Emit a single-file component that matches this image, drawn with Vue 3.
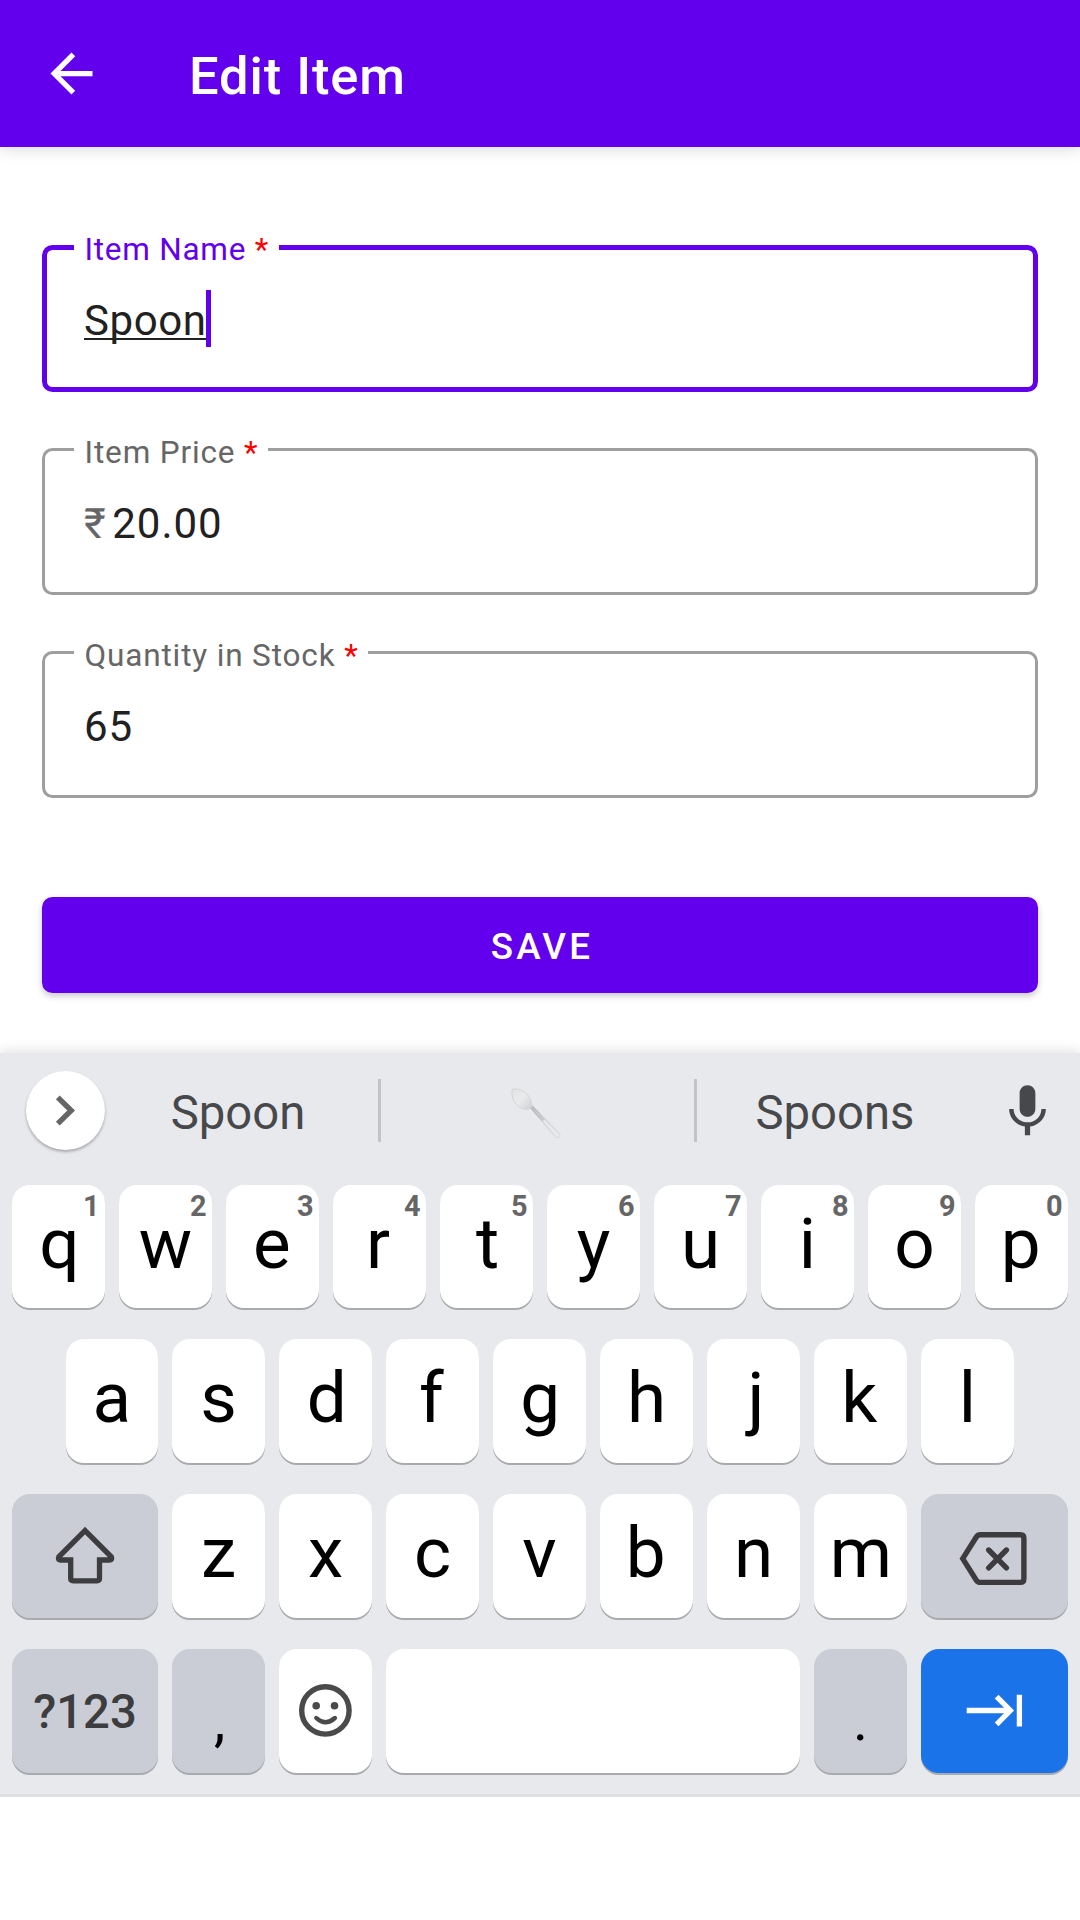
<script setup>
const fields = [
  { label: 'Item Name', value: 'Spoon', focused: true },
  { label: 'Item Price', value: '20.00', prefix: '₹' },
  { label: 'Quantity in Stock', value: '65' },
]
const row1 = [...'qwertyuiop'].map((c, i) => ({ c, hint: (i + 1) % 10 }))
const row2 = [...'asdfghjkl']
const row3 = [...'zxcvbnm']

// Optical centring: nudges in px for glyphs with uneven side bearings
const nudges = { q: 1, e: -0.6, r: -1.4, t: 1, p: -0.7, d: 1.3, f: -1.2, g: 0.7, j: 2.6, k: -1.3, b: -0.7, m: 0.5 }
const nudge = (c) => ({ transform: `translateX(${nudges[c] || 0}px)` })
</script>

<template>
  <div class="screen">
    <header class="appbar">
      <svg class="back" viewBox="0 0 24 24"><path fill="#fff" d="M20 11H7.83l5.59-5.59L12 4l-8 8 8 8 1.41-1.41L7.83 13H20v-2z" /></svg>
      <h1>Edit Item</h1>
    </header>

    <main class="form">
      <div v-for="f in fields" :key="f.label" class="field" :class="{ focused: f.focused }">
        <label>{{ f.label }} <span class="star">*</span></label>
        <span v-if="f.prefix" class="prefix">{{ f.prefix }}</span>
        <span class="value">{{ f.value }}</span>
        <span v-if="f.focused" class="caret"></span>
      </div>
      <button class="save">SAVE</button>
    </main>

    <section class="keyboard">
      <div class="strip">
        <div class="expand">
          <svg width="79" height="79" viewBox="0 0 79 79"><path d="M31.8 26.3 L45.2 39.5 L31.8 52.7" fill="none" stroke="#666" stroke-width="5.4" /></svg>
        </div>
        <div class="suggestion first">Spoon</div>
        <i class="divider"></i>
        <div class="suggestion emoji">
          <svg width="54" height="54" viewBox="510 1086 54 54">
            <defs>
              <linearGradient id="bowl" x1="0" y1="0" x2="1" y2="1">
                <stop offset="0" stop-color="#e2e3e4" /><stop offset=".5" stop-color="#e9eaeb" /><stop offset="1" stop-color="#cfd0d1" />
              </linearGradient>
              <linearGradient id="handle" x1="0" y1="0" x2="1" y2="1">
                <stop offset="0" stop-color="#a9abac" /><stop offset=".4" stop-color="#cfd0d1" /><stop offset="1" stop-color="#dcdddd" />
              </linearGradient>
            </defs>
            <path d="M531 1107 L533.5 1106.5 L560.3 1133.6 Q561.8 1136 560 1137.3 Q558 1138.2 556 1136.4 Z" fill="#e8e9ea" stroke="url(#handle)" stroke-width="1.3" />
            <path d="M531 1107.5 L533.5 1106.5 L546 1120 L543 1121 Z" fill="#bcbebf" opacity=".75" />
            <path d="M513 1089.8 Q514.5 1088.2 519 1089.3 Q527 1090.8 531.2 1098.5 Q532.9 1102 532.4 1107.4 Q530.5 1109.5 526 1109.2 Q518.5 1108 514.5 1100.5 Q512.2 1095 513 1089.8Z" fill="url(#bowl)" stroke="#d3d4d5" stroke-width="1" />
          </svg>
        </div>
        <i class="divider"></i>
        <div class="suggestion last">Spoons</div>
        <svg class="mic" viewBox="0 0 24 24"><path fill="#47484a" d="M12 14c1.66 0 2.99-1.34 2.99-3L15 5c0-1.66-1.34-3-3-3S9 3.34 9 5v6c0 1.66 1.34 3 3 3zm5.3-3c0 3-2.54 5.1-5.3 5.1S6.7 14 6.7 11H5c0 3.41 2.72 6.23 6 6.72V21h2v-3.28c3.28-.48 6-3.3 6-6.72h-1.7z" /></svg>
      </div>

      <div class="row top">
        <div v-for="k in row1" :key="k.c" class="key"><span :style="nudge(k.c)">{{ k.c }}</span><sup>{{ k.hint }}</sup></div>
      </div>
      <div class="row middle">
        <div v-for="k in row2" :key="k" class="key"><span :style="nudge(k)">{{ k }}</span></div>
      </div>
      <div class="row">
        <div class="key wide dark">
          <svg width="146" height="124" viewBox="12 1494 146 124"><path d="M85 1530.6 L58.8 1556.8 Q57.4 1559.8 60.4 1560 H70.7 V1578.3 Q70.7 1580.8 73.2 1580.8 H97 Q99.5 1580.8 99.5 1578.3 V1560 H109.7 Q112.7 1559.8 111.3 1556.8 Z" fill="none" stroke="#3d3d3f" stroke-width="5.3" /></svg>
        </div>
        <div v-for="k in row3" :key="k" class="key"><span :style="nudge(k)">{{ k }}</span></div>
        <div class="key wider dark">
          <svg width="147" height="124" viewBox="921 1494 147 124"><g fill="none" stroke="#3d3b3e" stroke-width="5.4"><path d="M962.7 1558.6 L976.3 1537 Q977.8 1534.8 980.3 1534.8 H1020.3 Q1023.9 1534.8 1023.9 1538.4 V1578.8 Q1023.9 1582.4 1020.3 1582.4 H980.3 Q977.8 1582.4 976.3 1580.2 Z" /><path stroke-linecap="round" d="M988.7 1550 L1006.4 1567.8 M1006.4 1550 L988.7 1567.8" /></g></svg>
        </div>
      </div>
      <div class="row">
        <div class="key wide dark symbols">?123</div>
        <div class="key dark punct comma">,</div>
        <div class="key">
          <svg width="93" height="124" viewBox="279 1649 93 124"><circle cx="325.4" cy="1710.4" r="23.7" fill="none" stroke="#4a4a4b" stroke-width="5.4" /><circle cx="316.2" cy="1705.7" r="3.8" fill="#4a4a4b" /><circle cx="334.5" cy="1705.7" r="3.8" fill="#4a4a4b" /><path d="M316.3 1718 Q325.4 1726.5 334.9 1718" fill="none" stroke="#4a4a4b" stroke-width="4.4" stroke-linecap="round" /></svg>
        </div>
        <div class="key space"></div>
        <div class="key dark punct">.</div>
        <div class="key wider next">
          <svg width="147" height="124" viewBox="921 1649 147 124"><path d="M966.7 1710.5 H1010 M996.6 1696.6 L1010.4 1710.5 L996.6 1724.4 M1019.4 1694.8 V1726.6" fill="none" stroke="#fff" stroke-width="5.3" /></svg>
        </div>
      </div>
    </section>
  </div>
</template>

<style>
body { margin: 0; background: #fff; }
</style>

<style scoped>
* { box-sizing: border-box; }
.screen { width: 1080px; height: 1920px; display: flex; flex-direction: column; background: #fff; font-family: Roboto, "Liberation Sans", sans-serif; overflow: hidden; }
.appbar { height: 147px; flex: none; display: flex; align-items: center; padding-left: 40px; background: #6200ee; box-shadow: 0 3px 14px rgba(0, 0, 0, .13); }
.back { width: 63px; height: 63px; margin: -1px 86px 0 0; }
h1 { margin: 0; padding-top: 4px; font-size: 52.5px; font-weight: 500; line-height: 60px; letter-spacing: .9px; color: #fff; }
.form { height: 906px; flex: none; padding: 98px 42px 0; display: flex; flex-direction: column; }
.field { position: relative; flex: none; height: 147px; margin-bottom: 56px; padding: 4px 42px 0; display: flex; align-items: center; border-radius: 10.5px; box-shadow: inset 0 0 0 3px #9e9e9e; font-size: 42px; letter-spacing: 1px; color: #212121; }
.field.focused { box-shadow: inset 0 0 0 5px #6200ee; letter-spacing: .6px; }
label { position: absolute; left: 32px; top: -14px; padding: 0 9.5px 0 10.5px; background: #fff; font-size: 31.5px; line-height: 38px; letter-spacing: .85px; color: #666; white-space: nowrap; }
.focused label { color: #6200ee; letter-spacing: .75px; }
.star { color: #f00; }
.prefix { color: #666; margin-right: 5.5px; }
.value { line-height: 50px; }
.focused .value { text-decoration: underline; text-decoration-thickness: 2px; text-underline-offset: 3px; text-decoration-skip-ink: none; }
.caret { width: 5px; height: 57px; margin: -4px 0 0 -1px; background: #6200ee; }
.save { margin-top: 43px; height: 96px; flex: none; padding: 3px 0 0 4px; border: 0; border-radius: 10.5px; background: #6200ee; color: #fff; font: 500 36.75px Roboto, sans-serif; letter-spacing: 3.28px; box-shadow: 0 3px 6px rgba(0, 0, 0, .22); }
.keyboard { height: 744px; flex: none; background: #e8e9ed; border-bottom: 3px solid #dfe0e0; box-shadow: 0 -2px 12px rgba(0, 0, 0, .12); clip-path: inset(-20px 0 0 0); display: flex; flex-direction: column; }
.strip { height: 115px; flex: none; margin-bottom: 17px; padding-left: 26px; display: flex; align-items: center; }
.expand { width: 79px; height: 79px; border-radius: 50%; background: #fff; box-shadow: 0 2px 3px rgba(0, 0, 0, .28); }
.expand svg, .mic { display: block; }
.suggestion { width: 313px; display: flex; justify-content: center; padding-top: 5px; font-size: 47.25px; line-height: 56px; color: #47484a; }
.suggestion.first { width: 273px; padding-right: 7px; }
.suggestion.emoji { padding: 4px 3px 0 0; }
.suggestion.last { width: 276px; }
.divider { width: 3px; height: 63px; background: #c2c3c7; }
.mic { width: 63px; height: 63px; margin: 2px 0 0 23px; }
.row { height: 124px; flex: none; margin-bottom: 31px; padding-left: 12px; display: flex; gap: 14px; }
.row.top { height: 123px; }
.row.middle { padding-left: 65.5px; }
.key { position: relative; width: 93px; display: flex; align-items: center; justify-content: center; padding-bottom: 6px; border-radius: 18px; background: #fff; box-shadow: 0 2px 0 #a9aaad; font-size: 71px; line-height: 80px; color: #000; }
.row.middle .key:first-child { width: 92.5px; }
.key:has(svg) { padding: 0; }
.key svg { display: block; }
.key.wide { width: 146px; }
.key.wider { width: 147px; }
.key.space { width: 414px; }
.key.dark { background: #cbcdd6; }
.key.next { background: #1a73e8; }
.key.symbols { padding: 2px 0 0; font-size: 47.25px; font-weight: 500; color: #3d3d40; }
.key.punct { padding: 20px 0 0; font-size: 57px; }
.key.comma { padding-left: 2px; }
sup { position: absolute; right: 5.5px; top: 4px; font-size: 28.9px; font-weight: 700; line-height: 34px; color: #666; }
</style>
